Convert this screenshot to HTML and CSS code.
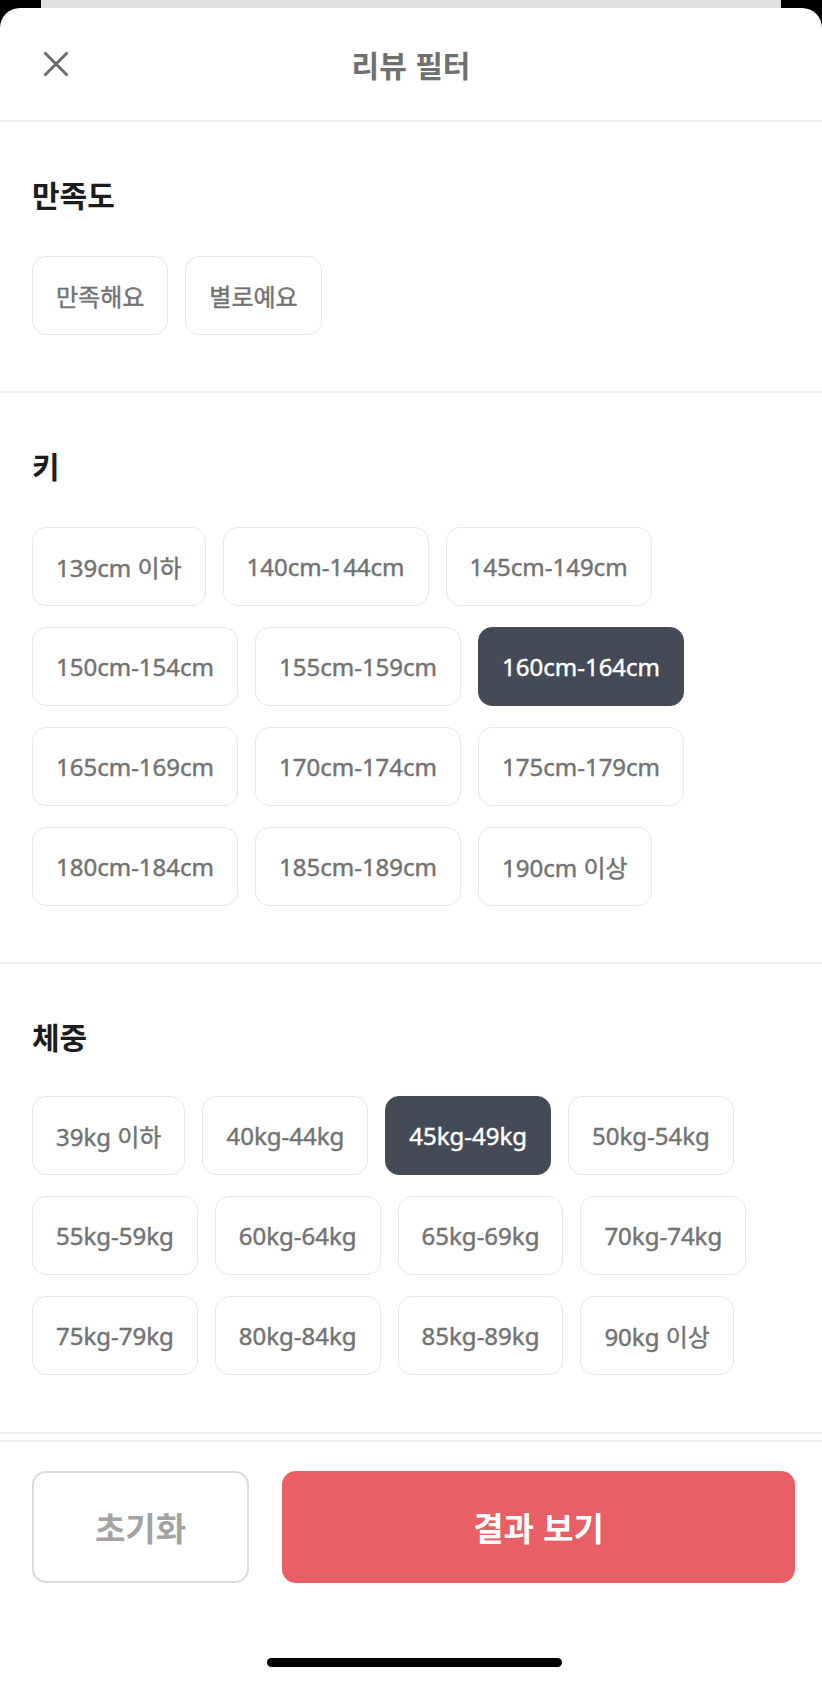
FILE: index.html
```html
<!DOCTYPE html>
<html lang="ko">
<head>
<meta charset="utf-8">
<title>리뷰 필터</title>
<link rel="stylesheet" href="styles.css">
</head>
<body>
<div class="stack-strip"><div class="stack-card"></div></div>
<div class="sheet">
  <header class="sheet-header">
    <button class="close-btn" aria-label="닫기">
      <svg width="28" height="28" viewBox="0 0 28 28"><path d="M2.5 2.5 L25.5 25.5 M25.5 2.5 L2.5 25.5" stroke="#6b6b6b" stroke-width="3" fill="none"/></svg>
    </button>
    <h1 class="sheet-title">리뷰 필터</h1>
    <span></span>
  </header>

  <section class="filter-section">
    <h2 class="section-title">만족도</h2>
    <div class="chips">
      <button class="chip">만족해요</button>
      <button class="chip">별로예요</button>
    </div>
  </section>

  <section class="filter-section">
    <h2 class="section-title">키</h2>
    <div class="chips">
      <button class="chip">139cm 이하</button>
      <button class="chip">140cm-144cm</button>
      <button class="chip">145cm-149cm</button>
      <button class="chip">150cm-154cm</button>
      <button class="chip">155cm-159cm</button>
      <button class="chip is-selected">160cm-164cm</button>
      <button class="chip">165cm-169cm</button>
      <button class="chip">170cm-174cm</button>
      <button class="chip">175cm-179cm</button>
      <button class="chip">180cm-184cm</button>
      <button class="chip">185cm-189cm</button>
      <button class="chip">190cm 이상</button>
    </div>
  </section>

  <section class="filter-section">
    <h2 class="section-title">체중</h2>
    <div class="chips">
      <button class="chip">39kg 이하</button>
      <button class="chip">40kg-44kg</button>
      <button class="chip is-selected">45kg-49kg</button>
      <button class="chip">50kg-54kg</button>
      <button class="chip">55kg-59kg</button>
      <button class="chip">60kg-64kg</button>
      <button class="chip">65kg-69kg</button>
      <button class="chip">70kg-74kg</button>
      <button class="chip">75kg-79kg</button>
      <button class="chip">80kg-84kg</button>
      <button class="chip">85kg-89kg</button>
      <button class="chip">90kg 이상</button>
    </div>
  </section>

  <footer class="sheet-footer">
    <div class="actions">
      <button class="btn-reset">초기화</button>
      <button class="btn-apply">결과 보기</button>
    </div>
    <div class="home-indicator"></div>
  </footer>
</div>
</body>
</html>
```

FILE: styles.css
```css
* { box-sizing: border-box; }
html, body { margin: 0; padding: 0; }
body {
  background: #000;
  width: 822px;
  height: 1683px;
  overflow: hidden;
  font-family: "Noto Sans", "Noto Sans CJK KR", sans-serif;
}
button { font-family: inherit; cursor: pointer; }

.stack-strip {
  height: 8px;
  padding: 0 41px;
}
.stack-card {
  height: 100%;
  background: #e0e0e0;
}

.sheet {
  background: #fff;
  border-radius: 20px 20px 0 0;
  height: 1675px;
  display: flex;
  flex-direction: column;
}

.sheet-header {
  height: 114px;
  border-bottom: 2px solid #efefef;
  display: grid;
  grid-template-columns: 1fr auto 1fr;
  align-items: center;
}
.close-btn {
  justify-self: start;
  margin-left: 42px;
  padding: 0;
  border: 0;
  background: none;
  width: 28px;
  height: 28px;
  display: flex;
}
.sheet-title {
  margin: 0;
  font-family: "Noto Sans CJK KR", sans-serif;
  font-size: 30px;
  font-weight: 700;
  color: #707070;
  line-height: 32px;
}

.filter-section {
  padding: 56px 32px 56px;
  border-bottom: 2px solid #efefef;
}
.filter-section:last-of-type {
  padding-bottom: 57px;
}
.section-title {
  margin: 0 0 46px;
  font-family: "Noto Sans CJK KR", sans-serif;
  font-size: 30px;
  font-weight: 700;
  color: #1c1c1c;
  line-height: 32px;
}
.filter-section:last-of-type .section-title {
  margin-bottom: 44px;
}
.chips {
  display: flex;
  flex-wrap: wrap;
  column-gap: 17px;
  row-gap: 21px;
}
.chip {
  height: 79px;
  padding: 0 23px;
  border: 1.5px solid #e8e8e8;
  border-radius: 14px;
  background: #fff;
  color: #737373;
  font-size: 24px;
  font-weight: 400;
  -webkit-text-stroke: 0.45px currentColor;
  letter-spacing: 0;
  white-space: nowrap;
}
.chip.is-selected {
  background: #444b57;
  border-color: #444b57;
  color: #fff;
}

.sheet-footer {
  margin-top: 6px;
  border-top: 2px solid #efefef;
  flex: 1;
  display: flex;
  flex-direction: column;
  align-items: center;
}
.actions {
  align-self: stretch;
  display: flex;
  gap: 33px;
  padding: 29px 27px 0 32px;
}
.btn-reset, .btn-apply {
  height: 112px;
  border-radius: 14px;
  font-family: "Noto Sans CJK KR", sans-serif;
  font-size: 33px;
  font-weight: 700;
}
.btn-reset {
  width: 217px;
  background: #fff;
  border: 2px solid #dcdcdc;
  color: #a3a3a3;
}
.btn-apply {
  flex: 1;
  background: #e95f66;
  border: 0;
  color: #fff;
}
.home-indicator {
  margin: 75px 0 0 6px;
  width: 295px;
  height: 9px;
  border-radius: 5px;
  background: #000;
}
```
